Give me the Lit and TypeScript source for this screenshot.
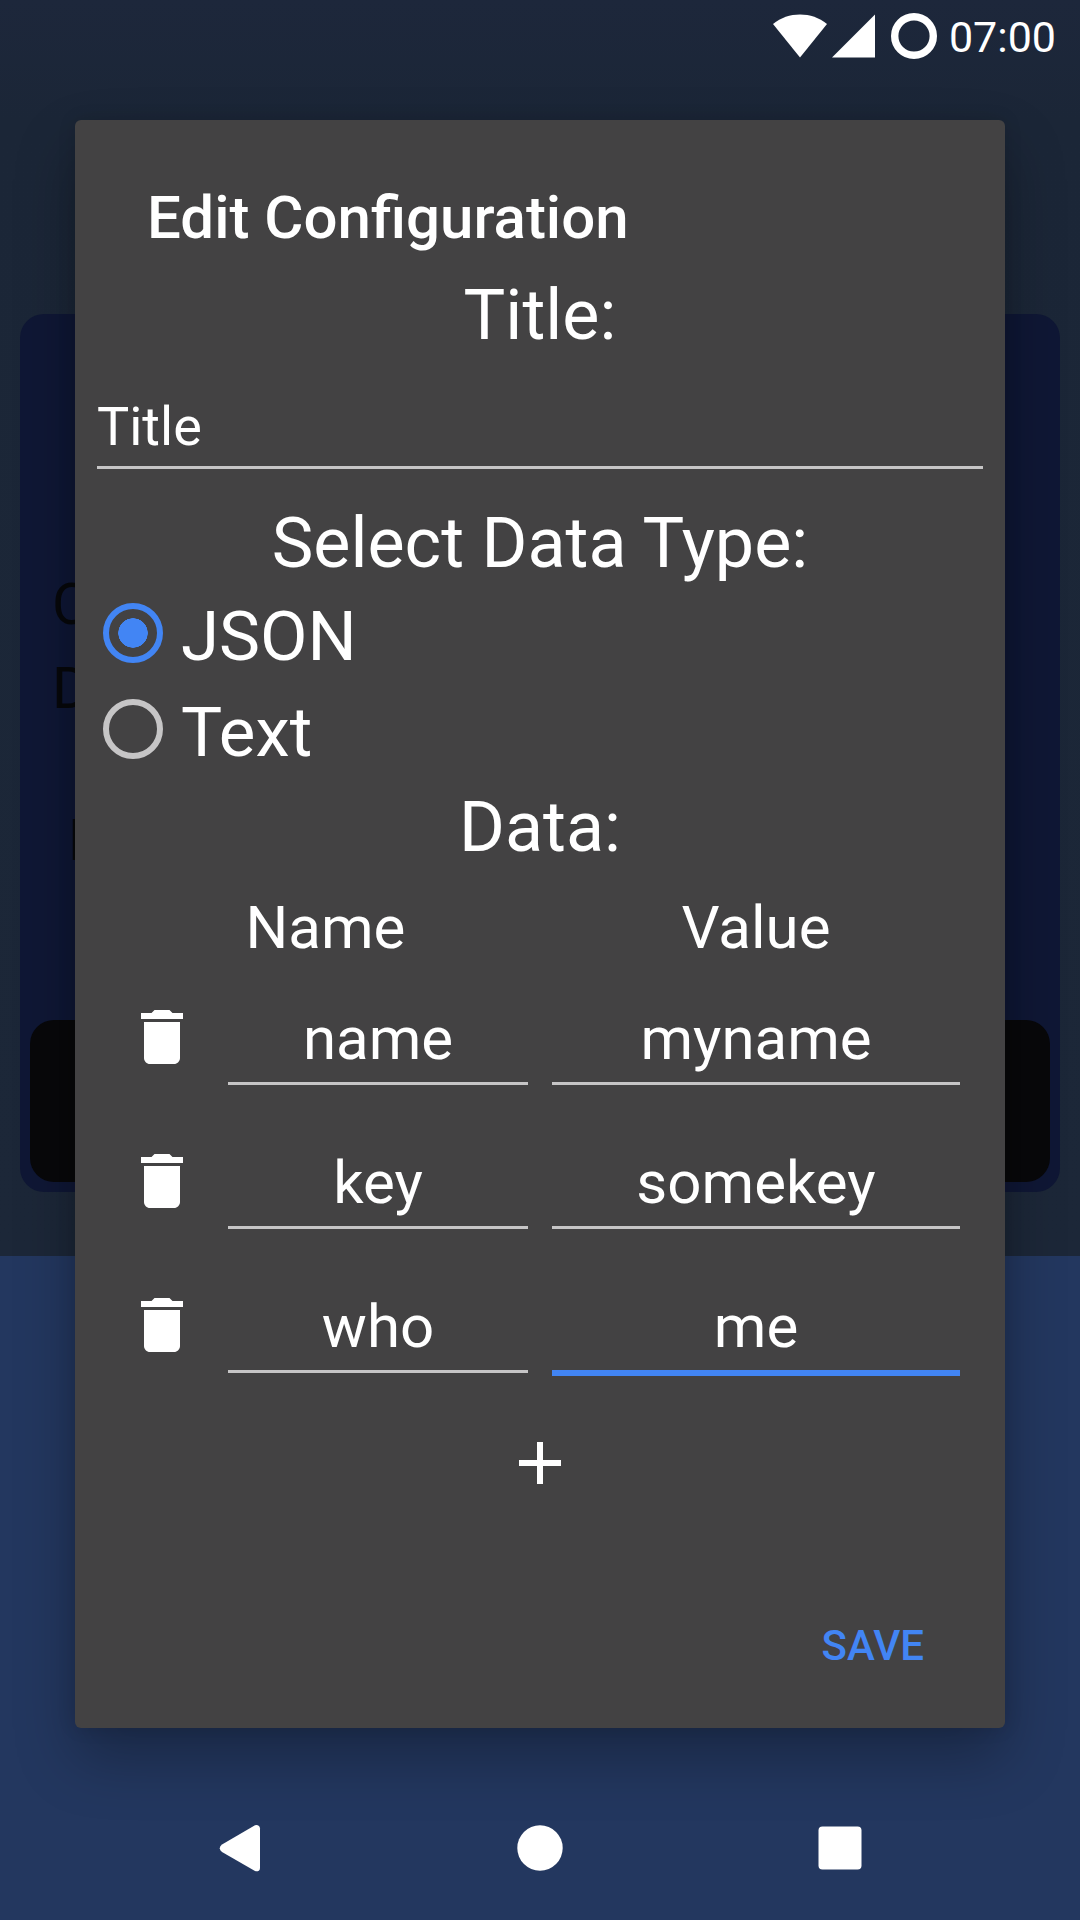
import { LitElement, html, css } from "lit";
import { customElement, state } from "lit/decorators.js";
import { classMap } from "lit/directives/class-map.js";

interface Entry {
  name: string;
  value: string;
}

/** The dimmed page that lies behind the dialog. */
@customElement("config-backdrop")
export class ConfigBackdrop extends LitElement {
  static styles = css`
    :host {
      display: flex;
      flex-direction: column;
      background: #23375f;
      color: #07080b;
      font-family: Roboto, "Liberation Sans", sans-serif;
    }
    .page {
      box-sizing: border-box;
      min-height: 1256px;
      padding: 314px 20px 64px;
      background: linear-gradient(#1d273b, #1b2637 120px, #1c2738);
    }
    .card {
      box-sizing: border-box;
      display: flex;
      flex-direction: column;
      min-height: 878px;
      padding: 248px 10px 10px;
      border-radius: 24px;
      background: #0f1735;
    }
    .line {
      margin: 0;
      padding-left: 22px;
      font-size: 58px;
      line-height: 84px;
    }
    .line.inset {
      margin-top: 68px;
      padding-left: 38px;
    }
    .bar {
      height: 162px;
      margin-top: auto;
      border-radius: 24px;
      background: #08080a;
    }
  `;

  render() {
    return html`
      <div class="page">
        <div class="card">
          <p class="line">C</p>
          <p class="line">D</p>
          <p class="line inset">E</p>
          <div class="bar"></div>
        </div>
      </div>
    `;
  }
}

@customElement("status-bar")
export class StatusBar extends LitElement {
  static styles = css`
    :host {
      display: flex;
      align-items: center;
      justify-content: flex-end;
      height: 72px;
      padding-right: 24px;
      color: #fff;
      font: 400 43px/48px Roboto, "Liberation Sans", sans-serif;
    }
    svg {
      display: block;
      fill: currentColor;
    }
    time {
      padding-top: 2px;
    }
    .signal {
      margin-left: 5px;
    }
    .ring {
      margin: 0 12px 0 16px;
    }
  `;

  render() {
    return html`
      <svg width="54" height="44" viewBox="0 0 54 44" aria-hidden="true">
        <path d="M27 43.500L0 10C8 3.500 17 .5 27 .5S46 3.500 54 10Z" />
      </svg>
      <svg class="signal" width="43" height="44" viewBox="0 0 43 44" aria-hidden="true">
        <path d="M43 .5V43.500H0Z" />
      </svg>
      <svg class="ring" width="46" height="46" viewBox="0 0 46 46" aria-hidden="true">
        <circle cx="23" cy="23" r="19.300" fill="none" stroke="currentColor" stroke-width="7.400" />
      </svg>
      <time>07:00</time>
    `;
  }
}

@customElement("nav-bar")
export class NavBar extends LitElement {
  static styles = css`
    :host {
      display: flex;
      justify-content: center;
      height: 144px;
      padding: 0 90px;
    }
    button {
      flex: 1;
      display: grid;
      place-items: center;
      padding: 0;
      border: 0;
      background: none;
      color: #fff;
    }
    svg {
      display: block;
      fill: currentColor;
    }
  `;

  render() {
    return html`
      <button type="button" aria-label="Back">
        <svg width="48" height="48" viewBox="0 0 48 48">
          <path
            d="M6 20.500L39 1.200Q41 .3 43 2Q44 3 44 4.500V44Q44 46 42.800 46.800Q41 47.800 39 47L6 28Q1.500 24.200 6 20.500Z"
          />
        </svg>
      </button>
      <button type="button" aria-label="Home">
        <svg width="46" height="46" viewBox="0 0 46 46"><circle cx="23" cy="23" r="22.700" /></svg>
      </button>
      <button type="button" aria-label="Overview">
        <svg width="44" height="44" viewBox="0 0 44 44">
          <rect x=".5" y=".5" width="43" height="43" rx="4" />
        </svg>
      </button>
    `;
  }
}

@customElement("config-dialog")
export class ConfigDialog extends LitElement {
  static styles = css`
    :host {
      display: block;
      color: #fff;
      font-family: Roboto, "Liberation Sans", sans-serif;
    }
    .dialog {
      display: flex;
      flex-direction: column;
      padding: 62px 22px 28px;
      border-radius: 6px;
      background: #434243;
      box-shadow: 0 30px 60px rgba(0, 0, 0, 0.28), 0 0 18px rgba(0, 0, 0, 0.12);
    }
    h1 {
      margin: 0 0 19px;
      padding: 0 50px;
      font-size: 60px;
      font-weight: 500;
      line-height: 72px;
    }
    .caption {
      display: block;
      padding: 0;
      font-size: 70px;
      line-height: 84px;
      text-align: center;
    }
    .types {
      display: block;
      min-width: 0;
      margin: 32px 0 8px;
      padding: 0;
      border: 0;
    }
    .types .caption {
      width: 100%;
    }
    input {
      font-family: inherit;
      color: inherit;
    }
    .field {
      box-sizing: border-box;
      display: block;
      width: 100%;
      height: 84px;
      margin: 0;
      padding: 1px 0 8px;
      border: 0;
      border-bottom: 3px solid #c6c5c6;
      border-radius: 0;
      outline: 0;
      background: none;
      font-size: 60px;
      line-height: 72px;
      text-align: center;
    }
    .field.active {
      height: 87px;
      margin-bottom: -3px;
      border-bottom: 6px solid #4285f4;
    }
    .field.title {
      height: 80px;
      margin-top: 32px;
      padding: 1px 0 4px;
      border-bottom: 3px solid #c6c5c6;
      font-size: 54px;
      text-align: left;
    }
    .option {
      display: flex;
      align-items: center;
      gap: 18px;
      height: 96px;
      padding-left: 6px;
      font-size: 69px;
      line-height: 84px;
    }
    .option span {
      padding-top: 8px;
    }
    .option input {
      appearance: none;
      box-sizing: border-box;
      width: 60px;
      height: 60px;
      margin: 0;
      padding: 9px;
      border: 6px solid #c6c5c6;
      border-radius: 50%;
      background-clip: content-box;
    }
    .option input:checked {
      border-color: #4285f4;
      background: radial-gradient(circle closest-side, #4285f4 97%, transparent) content-box;
    }
    table,
    thead,
    tbody {
      display: block;
    }
    table {
      margin: 23px 23px 0 26px;
    }
    tr {
      display: grid;
      grid-template-columns: 81px 25fr 34fr;
      column-gap: 24px;
    }
    th,
    td {
      padding: 0;
    }
    th {
      font-size: 60px;
      font-weight: 400;
      line-height: 72px;
    }
    .wide {
      grid-column: 1 / 3;
    }
    tbody {
      display: grid;
      row-gap: 60px;
      margin-top: 37px;
    }
    .icon {
      display: block;
      padding: 0;
      border: 0;
      background: none;
      color: #fff;
    }
    .icon svg {
      display: block;
      width: 72px;
      height: 72px;
      fill: currentColor;
    }
    .remove {
      margin-left: 3px;
    }
    .add {
      align-self: center;
      margin-top: 54px;
    }
    .save {
      align-self: flex-end;
      height: 108px;
      margin: 93px 35px 0 0;
      padding: 0 24px;
      border: 0;
      background: none;
      color: #4285f4;
      font: 500 42px/48px Roboto, "Liberation Sans", sans-serif;
    }
  `;

  @state() private entries: Entry[] = [
    { name: "name", value: "myname" },
    { name: "key", value: "somekey" },
    { name: "who", value: "me" },
  ];

  @state() private activeField = "value-2";

  private cell(kind: "name" | "value", entry: Entry, index: number) {
    const id = `${kind}-${index}`;
    return html`
      <td>
        <input
          id=${id}
          type="text"
          class=${classMap({ field: true, active: this.activeField === id })}
          aria-label=${`${kind} ${index + 1}`}
          .value=${entry[kind]}
          @focus=${() => (this.activeField = id)}
          @input=${(e: Event) => (entry[kind] = (e.target as HTMLInputElement).value)}
        />
      </td>
    `;
  }

  private remove(index: number) {
    this.entries = this.entries.filter((_, i) => i !== index);
  }

  private add() {
    this.entries = [...this.entries, { name: "", value: "" }];
  }

  render() {
    return html`
      <form
        class="dialog"
        role="dialog"
        aria-labelledby="heading"
        @submit=${(e: Event) => e.preventDefault()}
      >
        <h1 id="heading">Edit Configuration</h1>
        <label class="caption" for="title">Title:</label>
        <input id="title" class="field title" type="text" value="Title" />

        <fieldset class="types">
          <legend class="caption">Select Data Type:</legend>
          <label class="option">
            <input type="radio" name="type" value="json" checked /><span>JSON</span>
          </label>
          <label class="option">
            <input type="radio" name="type" value="text" /><span>Text</span>
          </label>
        </fieldset>

        <div class="caption" id="data">Data:</div>
        <table aria-labelledby="data">
          <thead>
            <tr>
              <th class="wide" scope="col">Name</th>
              <th scope="col">Value</th>
            </tr>
          </thead>
          <tbody>
            ${this.entries.map(
              (entry, i) => html`
                <tr>
                  <td>
                    <button
                      class="icon remove"
                      type="button"
                      aria-label="Delete row"
                      @click=${() => this.remove(i)}
                    >
                      <svg viewBox="0 0 24 24">
                        <path
                          d="M6 19c0 1.100.9 2 2 2h8c1.100 0 2-.9 2-2V7H6v12zM19 4h-3.500l-1-1h-5l-1 1H5v2h14V4z"
                        />
                      </svg>
                    </button>
                  </td>
                  ${this.cell("name", entry, i)} ${this.cell("value", entry, i)}
                </tr>
              `
            )}
          </tbody>
        </table>
        <button class="icon add" type="button" aria-label="Add row" @click=${this.add}>
          <svg viewBox="0 0 24 24"><path d="M19 13h-6v6h-2v-6H5v-2h6V5h2v6h6v2z" /></svg>
        </button>
        <button class="save" type="submit">SAVE</button>
      </form>
    `;
  }
}

@customElement("app-root")
export class AppRoot extends LitElement {
  static styles = css`
    :host {
      display: grid;
      grid-template: "screen" minmax(100vh, auto) / minmax(0, 1fr);
    }
    .behind,
    .front {
      grid-area: screen;
    }
    .front {
      display: flex;
      flex-direction: column;
      z-index: 1;
    }
    .panel {
      margin: 48px 75px;
    }
    .nav {
      margin-top: auto;
    }
  `;

  render() {
    return html`
      <config-backdrop class="behind"></config-backdrop>
      <div class="front">
        <status-bar></status-bar>
        <config-dialog class="panel"></config-dialog>
        <nav-bar class="nav"></nav-bar>
      </div>
    `;
  }
}
